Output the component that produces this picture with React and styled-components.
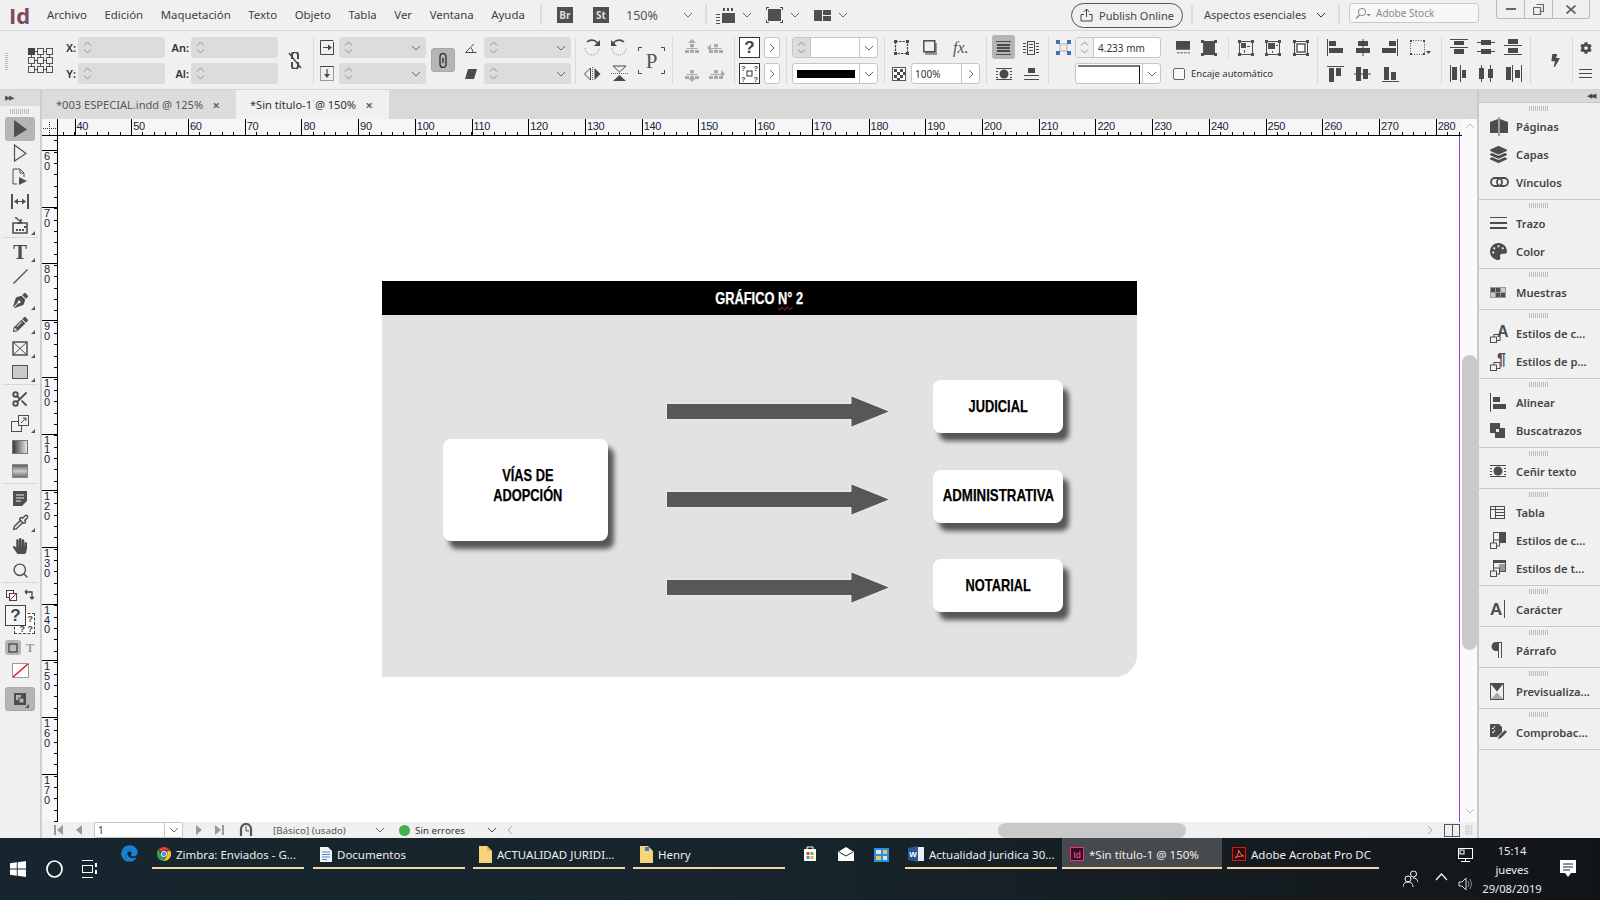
import React from "react";
import styled, { createGlobalStyle } from "styled-components";
import { FaPenNib, FaPencilAlt, FaHandPaper, FaLayerGroup, FaPalette, FaCog, FaBolt, FaEdge } from "react-icons/fa";
import { Scissors, Search, Pipette } from "lucide-react";

const Global = createGlobalStyle`
  html, body { margin: 0; padding: 0; background: #f0f0f0; overflow: hidden; }
  * { box-sizing: border-box; }
  body { font-family: "Noto Sans", "Open Sans", sans-serif; color: #444; }
`;

const rects = (list) => list.map(([x, y, w, h], i) => <rect key={i} x={x} y={y} width={w} height={h} />);

function Glyph({ w = 16, h = 16, children, color }) {
  return (
    <svg width={w} height={h} viewBox={`0 0 ${w} ${h}`} fill="currentColor" style={color ? { color } : undefined}>
      {children}
    </svg>
  );
}

const line = { fill: "none", stroke: "currentColor", strokeWidth: 1 };
const Chev = ({ dir = "down", w = 10, color = "#6a6a6a" }) => {
  const d = { down: "M1 2 L5 6 L9 2", up: "M1 6 L5 2 L9 6", right: "M3 0 L7 4 L3 8", left: "M7 0 L3 4 L7 8" }[dir];
  return <svg width={w} height="8" viewBox="0 0 10 8"><path d={d} fill="none" stroke={color} strokeWidth="1" /></svg>;
};

/* ---------- top menu ---------- */
const MenuBar = styled.div`
  height: 31px;
  display: flex;
  align-items: center;
  border-bottom: 1px solid #d4d4d4;
  position: relative;
`;
const Logo = styled.div`
  font: 700 22px/30px "Open Sans", sans-serif;
  color: #7b4a66;
  margin-left: 9px;
  width: 38px;
`;
const MenuList = styled.div`
  width: 493px;
  display: flex;
  gap: 17.6px;
  padding-bottom: 1px;
`;
const MenuItem = styled.span`
  font-size: 11.4px;
  color: #3e3e3e;
  white-space: nowrap;
`;
const MenuDiv = styled.div`
  width: 2px;
  height: 20px;
  background: #dcdcdc;
  margin-left: ${(p) => p.$ml || 0}px;
`;
const AppBadge = styled.div`
  width: 16px;
  height: 16px;
  background: #4f4f4f;
  color: #ddd;
  font: 700 10px/16px "Open Sans", sans-serif;
  text-align: center;
  margin-left: ${(p) => p.$ml}px;
`;
const ZoomText = styled.span`
  font-size: 12.5px;
  color: #555;
  margin-left: 17px;
  width: 57px;
`;
const Slot = styled.div`
  display: flex;
  align-items: center;
  color: #505050;
  margin-left: ${(p) => p.$ml || 0}px;
  gap: ${(p) => p.$gap || 0}px;
`;
const Publish = styled.div`
  width: 112px;
  height: 25px;
  border: 1px solid #555;
  border-radius: 13px;
  margin-left: ${(p) => p.$ml}px;
  display: flex;
  align-items: center;
  justify-content: center;
  gap: 6px;
  font-size: 11px;
  color: #444;
`;
const Workspace = styled.span`
  font-size: 11px;
  color: #444;
  margin-left: 11px;
  width: 110px;
  white-space: nowrap;
  padding-bottom: 1px;
`;
const StockBox = styled.div`
  width: 130px;
  height: 20px;
  border: 1px solid #c9c9c9;
  border-radius: 3px;
  background: #f7f7f7;
  margin-left: 9px;
  margin-top: -4px;
  padding-left: 5px;
  display: flex;
  align-items: center;
  gap: 5px;
  font-size: 10px;
  color: #8a8a8a;
`;
const WinControls = styled.div`
  display: flex;
  height: 19px;
  align-self: flex-start;
  margin-left: 17px;
  border: 1px solid #b9b9b9;
  border-top: 0;
  border-radius: 0 0 3px 3px;
  color: #666;
`;
const WinBtn = styled.div`
  width: ${(p) => p.$w}px;
  display: flex;
  align-items: center;
  justify-content: center;
  & + & { border-left: 1px solid #b9b9b9; }
`;

/* ---------- control panel ---------- */
const ControlPanel = styled.div`
  height: 59px;
  padding: 6px 0 5px;
  display: flex;
  align-items: flex-start;
  border-bottom: 1px solid #d4d4d4;
  color: #4a4a4a;
`;
const Grip = styled.div`
  width: 3px;
  height: 18px;
  margin-left: 5px;
  align-self: center;
  background: repeating-linear-gradient(0deg, #bcbcbc 0 1px, transparent 1px 2px);
`;
const PanelDiv = styled.div`
  width: 1px;
  height: ${(p) => p.$h || 47}px;
  flex: none;
  background: #dadada;
  margin-left: ${(p) => p.$ml}px;
`;
const Cluster = styled.div`
  display: grid;
  flex: none;
  grid-template-columns: ${(p) => p.$cols};
  grid-template-rows: 21px 21px;
  column-gap: ${(p) => p.$gap || 0}px;
  row-gap: 5px;
  align-items: center;
  justify-items: center;
  margin-left: ${(p) => p.$ml}px;
`;
const Stack = styled.div`
  display: flex;
  flex-direction: column;
  flex: none;
  gap: 5px;
  width: ${(p) => p.$w}px;
  margin-left: ${(p) => p.$ml}px;
`;
const Row = styled.div`
  height: 21px;
  display: flex;
  align-items: center;
  padding-left: ${(p) => p.$pl || 0}px;
  gap: ${(p) => p.$gap || 0}px;
`;
const Centered = styled.div`
  align-self: center;
  flex: none;
  display: flex;
  margin-left: ${(p) => p.$ml}px;
`;
const Label = styled.span`
  font-size: 11px;
  font-weight: 600;
  color: #333;
  justify-self: end;
  padding-right: 2px;
`;
const SpinBox = styled.div`
  width: ${(p) => p.$w || 87}px;
  height: 21px;
  background: #dcdcdc;
  border-radius: 3px;
  display: flex;
  align-items: center;
  justify-content: space-between;
  padding: 0 5px 0 5px;
`;
const SpinArrows = styled.div`
  display: flex;
  flex-direction: column;
  gap: 3px;
`;
const Spin = () => (
  <SpinArrows>
    <svg width="9" height="5" viewBox="0 0 9 5"><path d="M1 4.5 L4.5 1 L8 4.5" fill="none" stroke="#8d8d8d" /></svg>
    <svg width="9" height="5" viewBox="0 0 9 5"><path d="M1 .5 L4.5 4 L8 .5" fill="none" stroke="#8d8d8d" /></svg>
  </SpinArrows>
);
const SpinField = ({ drop }) => (
  <SpinBox>
    <Spin />
    {drop && <Chev />}
  </SpinBox>
);
const ChainBtn = styled.div`
  width: 24px;
  height: 24px;
  margin-left: 5px;
  margin-top: 11px;
  background: #b5b5b5;
  border: 1px solid #a8a8a8;
  border-radius: 3px;
  display: flex;
  align-items: center;
  justify-content: center;
  flex: none;
  color: #333;
`;
const WhiteBox = styled.div`
  width: ${(p) => p.$w}px;
  height: 21px;
  background: #fff;
  border: 1px solid #c6c6c6;
  border-radius: 3px;
  display: flex;
  align-items: stretch;
  font-size: 10px;
  color: #333;
`;
const BoxPart = styled.div`
  display: flex;
  align-items: center;
  justify-content: ${(p) => p.$justify || "center"};
  width: ${(p) => (p.$w ? `${p.$w}px` : "auto")};
  flex: ${(p) => (p.$w ? "none" : 1)};
  background: ${(p) => p.$bg || "transparent"};
  padding: ${(p) => p.$pad || 0};
  & + & { border-left: 1px solid #c6c6c6; }
`;
const BlackBar = styled.div`
  width: 100%;
  height: 8px;
  background: #000;
`;
const StrokeSample = styled.div`
  width: 100%;
  height: 100%;
  border-top: 2px solid #777;
  border-right: 1px solid #111;
  margin: 2px 2px 1px;
`;
const NextBtn = styled.div`
  width: 16px;
  height: 21px;
  background: #fff;
  border: 1px solid #c6c6c6;
  border-radius: 3px;
  display: flex;
  align-items: center;
  justify-content: center;
`;
const QBox = styled.div`
  width: 21px;
  height: 21px;
  border: 1px solid #333;
  background: #fff;
  font: 700 17px/19px "Liberation Sans", sans-serif;
  color: #444;
  text-align: center;
`;
const DashQ = () => (
  <svg width="21" height="21" viewBox="0 0 21 21">
    <rect x=".5" y=".5" width="20" height="20" fill="#fff" stroke="#333" />
    <rect x="8" y="8" width="5" height="5" fill="none" stroke="#333" />
    <g fontFamily="Liberation Sans, sans-serif" fontWeight="700" fontSize="7.5" fill="#444">
      <text x="2" y="7.5">?</text>
      <text x="14.5" y="7.5">?</text>
      <text x="2" y="19">?</text>
      <text x="14.5" y="19">?</text>
    </g>
  </svg>
);
const WrapBtn = styled.div`
  width: 23px;
  height: 24px;
  margin-top: -1px;
  display: flex;
  align-items: center;
  justify-content: center;
  border-radius: 3px;
  background: ${(p) => (p.$on ? "#b5b5b5" : "transparent")};
`;
const Check = styled.span`
  width: 12px;
  height: 12px;
  border: 1px solid #666;
  border-radius: 2px;
  background: #f8f8f8;
`;
const CheckText = styled.span`
  font-size: 9.5px;
  color: #333;
  white-space: nowrap;
`;
const Fx = styled.i`
  font: italic 400 16px/18px "Liberation Serif", serif;
  color: #555;
`;

/* ---------- shell ---------- */
const Main = styled.div`
  display: flex;
  height: 748px;
`;
const ToolBar = styled.div`
  width: 42px;
  flex: none;
  background: #f0f0f0;
  border-right: 2px solid #cfcfcf;
  display: flex;
  flex-direction: column;
`;
const StripLeft = styled.div`
  height: 16px;
  background: #dcdcdc;
  color: #555;
  font-size: 7px;
  line-height: 15px;
  padding-left: 5px;
  letter-spacing: -1px;
`;
const SmallGrip = styled.div`
  width: 20px;
  height: 5px;
  flex: none;
  background: repeating-linear-gradient(90deg, #bdbdbd 0 1px, transparent 1px 2px);
`;
const ToolGrip = styled(SmallGrip)`
  margin: 3px auto 3px 10px;
`;
const Tool = styled.div`
  height: 24px;
  display: flex;
  align-items: center;
  justify-content: center;
  color: #4f4f4f;
  position: relative;
  width: 40px;
  ${(p) =>
    p.$corner &&
    `&::after { content: ""; position: absolute; right: 5px; bottom: 2px; border: 2px solid transparent; border-right-color: #555; border-bottom-color: #555; }`}
`;
const ToolOn = styled(Tool)`
  width: 30px;
  margin-left: 5px;
  background: #b5b5b5;
  border-radius: 3px;
`;
const ToolSep = styled.div`
  height: 3px;
  flex: none;
  border-top: 1px solid #d8d8d8;
  margin: 0 2px;
`;
const ToolT = styled.span`
  font: 700 21px/24px "Liberation Serif", serif;
  color: #4f4f4f;
`;
const Swatches = styled.div`
  height: 75px;
  position: relative;
`;
const SwatchRow = styled.div`
  height: 20px;
  display: flex;
  align-items: center;
  justify-content: space-between;
  padding: 0 5px 0 6px;
  color: #444;
`;
const BigQ = styled.div`
  position: absolute;
  left: 5px;
  top: 20px;
  width: 21px;
  height: 21px;
  background: #f5f5f5;
  border: 1px solid #444;
  font: 700 17px/19px "Liberation Sans", sans-serif;
  text-align: center;
  color: #444;
  z-index: 1;
`;
const BackQ = styled(BigQ)`
  left: 14px;
  top: 28px;
  z-index: 0;
  background: #fff;
  border-style: dashed;
  font-size: 9px;
  line-height: 10px;
  text-align: right;
  padding-right: 1px;
`;
const ModeRow = styled.div`
  position: absolute;
  left: 5px;
  top: 55px;
  display: flex;
  align-items: center;
  gap: 3px;
`;
const ModeBtn = styled.div`
  width: 16px;
  height: 15px;
  background: #b5b5b5;
  border-radius: 3px;
  display: flex;
  align-items: center;
  justify-content: center;
`;
const ModeT = styled.span`
  font: 700 12px/14px "Liberation Serif", serif;
  color: #9a9a9a;
  margin-left: 2px;
`;
const NoneSwatch = styled.div`
  width: 17px;
  height: 15px;
  margin: 3px 0 0 12px;
  background: #fff;
  border: 1px solid #999;
  display: flex;
`;
const ViewMode = styled(ToolOn)`
  margin-top: 9px;
  border: 1px solid #a9a9a9;
`;

const Center = styled.div`
  width: 1435px;
  flex: none;
  display: flex;
  flex-direction: column;
`;
const TabBar = styled.div`
  height: 29px;
  flex: none;
  background: #d9d9d9;
  display: flex;
`;
const Tab = styled.div`
  width: ${(p) => p.$w}px;
  background: ${(p) => (p.$on ? "#f0f0f0" : "#dcdcdc")};
  display: flex;
  align-items: center;
  justify-content: space-between;
  padding: 0 16px 0 14px;
  font-size: 11.1px;
  color: ${(p) => (p.$on ? "#333" : "#555")};
  white-space: nowrap;
  & b { font-size: 13px; color: #666; }
`;
const View = styled.div`
  flex: 1;
  display: flex;
  min-height: 0;
`;
const ViewLeft = styled.div`
  width: 1420px;
  display: flex;
  flex-direction: column;
`;
const HRuler = styled.div`
  height: 17px;
  flex: none;
  display: flex;
  background: #f6f6f6;
  border-bottom: 1px solid #000;
  overflow: hidden;
`;
const RulerCorner = styled.div`
  width: 16px;
  flex: none;
  border-right: 1px solid #000;
  color: #333;
`;
const HTrack = styled.div`
  flex: 1;
  display: flex;
  padding-left: 16.5px;
  background-image: repeating-linear-gradient(90deg, #000 0 1px, transparent 1px 11.346px);
  background-size: 100% 3px;
  background-position: 5.2px 100%;
  background-repeat: no-repeat;
`;
const HCell = styled.div`
  width: 56.73px;
  flex: none;
  border-left: 1px solid #000;
  padding-left: 1px;
  font: 11px/14px "Liberation Sans", sans-serif;
  letter-spacing: -0.3px;
  color: #1a2340;
`;
const Stage = styled.div`
  flex: 1;
  display: flex;
  min-height: 0;
`;
const VRuler = styled.div`
  width: 16px;
  flex: none;
  background-color: #f6f6f6;
  border-right: 1px solid #000;
  overflow: hidden;
  padding-top: 14px;
  background-image: repeating-linear-gradient(0deg, #000 0 1px, transparent 1px 11.346px);
  background-size: 3px 100%;
  background-position: 100% 0;
  background-repeat: no-repeat;
`;
const VCell = styled.div`
  height: 56.73px;
  border-top: 1px solid #000;
  padding: 1px 0 0 2px;
  font: 11px/9.8px "Liberation Sans", sans-serif;
  color: #1a2340;
  & span { display: block; }
`;
const Canvas = styled.div`
  flex: 1;
  background: #fff;
  padding-right: 2px;
  display: flex;
  overflow: hidden;
`;
const Page = styled.div`
  flex: 1;
  border-right: 1.5px solid #9b3fdc;
  padding: 145px 0 0 324px;
`;
const ScrollV = styled.div`
  width: 15px;
  flex: none;
  background: #fafafa;
  display: flex;
  flex-direction: column;
  align-items: center;
  padding-top: 3px;
`;
const ThumbV = styled.div`
  width: 15px;
  height: 295px;
  margin-top: 225px;
  margin-bottom: 157px;
  border-radius: 8px;
  background: #c9c9c9;
`;
const StatusBar = styled.div`
  height: 16px;
  flex: none;
  background: #f0f0f0;
  display: flex;
  align-items: center;
  font-size: 9.8px;
  color: #555;
`;
const StatusField = styled(WhiteBox)`
  height: 16px;
  margin-left: 12px;
  border-radius: 2px;
`;
const StatusText = styled.span`
  margin-left: ${(p) => p.$ml}px;
  width: ${(p) => p.$w}px;
  white-space: nowrap;
  color: ${(p) => p.$color || "#555"};
`;
const GreenDot = styled.span`
  width: 11px;
  height: 11px;
  border-radius: 50%;
  background: #3fb04a;
  margin-left: 14px;
`;
const ThumbH = styled.div`
  width: 188px;
  height: 15px;
  background: #c9c9c9;
  border-radius: 8px;
  margin-left: 483px;
`;
const SplitIcon = styled.div`
  width: 16px;
  height: 13px;
  border: 1px solid #555;
  margin-left: 9px;
  display: flex;
  justify-content: center;
  & i { width: 1px; background: #555; }
`;
const Resize = styled.div`
  width: 8px;
  height: 10px;
  margin-left: 5px;
  background: radial-gradient(#bbb 45%, transparent 50%) 0 0 / 2.5px 2.5px;
`;

/* ---------- chart on the page ---------- */
const Chart = styled.div`
  width: 755px;
  height: 396px;
  background: #e2e2e2;
  border-bottom-right-radius: 22px;
  display: flex;
  flex-direction: column;
`;
const ChartHead = styled.div`
  height: 34px;
  flex: none;
  background: #000;
  display: flex;
  align-items: center;
  justify-content: center;
  padding-top: 1px;
`;
const Condensed = styled.span`
  display: inline-block;
  font: 700 17px/20px "Liberation Sans", sans-serif;
  -webkit-text-stroke: 0.25px currentColor;
  white-space: nowrap;
  transform: scaleX(${(p) => p.$sx || 0.755});
  color: ${(p) => p.$color || "#000"};
  text-align: center;
`;
const Squiggle = styled.span`
  text-decoration: underline wavy #c0392b 1px;
  text-underline-offset: 2px;
`;
const ChartBody = styled.div`
  flex: 1;
  display: flex;
  align-items: flex-start;
  padding-left: 61px;
`;
const Box = styled.div`
  background: #fff;
  border-radius: 8px;
  box-shadow: 6px 8px 5px rgba(0, 0, 0, 0.62);
  display: flex;
  justify-content: center;
`;
const SourceBox = styled(Box)`
  width: 165px;
  height: 102px;
  margin-top: 124px;
  padding: 27px 0 0 5px;
`;
const ArrowCol = styled.div`
  width: 225px;
  margin: 80px 0 0 58px;
  display: flex;
  flex-direction: column;
  gap: 55px;
  & svg { display: block; }
`;
const TargetCol = styled.div`
  margin: 65px 0 0 42px;
  display: flex;
  flex-direction: column;
  gap: 36.5px;
`;
const TargetBox = styled(Box)`
  width: 130px;
  height: 53px;
  align-items: center;
`;

const Arrow = () => (
  <svg width="225" height="33" viewBox="0 0 225 33">
    <path d="M.5 8.5 H185 V.8 L224 16.5 L185 32.2 V24.5 H.5 Z" fill="#575756" stroke="#fff" strokeWidth=".8" />
  </svg>
);

/* ---------- right panels ---------- */
const Side = styled.div`
  width: 123px;
  flex: none;
  border-left: 2px solid #c9c9c9;
  background: #f0f0f0;
  display: flex;
  flex-direction: column;
`;
const StripRight = styled.div`
  height: 13px;
  flex: none;
  background: #d9d9d9;
  border-bottom: 1px solid #c9c9c9;
  color: #444;
  font-size: 7px;
  line-height: 11px;
  text-align: right;
  padding-right: 5px;
  letter-spacing: -1px;
`;
const Group = styled.div`
  border-bottom: 1px solid #cacaca;
  padding: 9px 0 3px;
  position: relative;
  &::before {
    content: "";
    position: absolute;
    left: 50px;
    top: 3px;
    width: 20px;
    height: 5px;
    background: repeating-linear-gradient(90deg, #bdbdbd 0 1px, transparent 1px 2px);
  }
`;
const Item = styled.div`
  height: 28px;
  display: flex;
  align-items: center;
  font-size: 11.2px;
  font-weight: 600;
  color: #444;
  white-space: nowrap;
`;
const ItemIcon = styled.div`
  width: 37px;
  padding-left: 11px;
  flex: none;
  display: flex;
  align-items: center;
  color: #4d4d4d;
`;

/* ---------- taskbar ---------- */
const Taskbar = styled.div`
  height: 62px;
  background: linear-gradient(90deg, #17262e 0%, #17242b 50%, #121518 100%);
  display: flex;
  align-items: flex-start;
  color: #f2f2f2;
`;
const TbIcon = styled.div`
  margin-left: ${(p) => p.$ml}px;
  margin-top: ${(p) => p.$mt}px;
  display: flex;
  flex: none;
  color: #fff;
`;
const Task = styled.div`
  width: ${(p) => p.$w || 152}px;
  height: 31px;
  flex: none;
  margin-left: ${(p) => p.$ml}px;
  border-bottom: 2px solid #f8d5a8;
  background: ${(p) => (p.$on ? "#474a4c" : "transparent")};
  display: flex;
  align-items: center;
  gap: 5px;
  padding: 3px 0 0 ${(p) => p.$pl || 5}px;
  font-size: 11.5px;
  color: #eee;
  white-space: nowrap;
  & svg { flex: none; }
`;
const TrayCol = styled.div`
  display: flex;
  flex-direction: column;
  margin-left: 10px;
  margin-top: 10px;
  gap: 15px;
`;
const Clock = styled.div`
  width: 70px;
  margin-left: 4px;
  padding-top: 3px;
  text-align: center;
  font-size: 11.2px;
  line-height: 19px;
  color: #eee;
`;

/* ---------- drawings ---------- */
const menuIcons = {
  film: <Glyph w={19} h={17}>{rects([[6, 6, 13, 10], [0, 7, 4, 1], [0, 10, 4, 1], [0, 13, 4, 1], [0, 16, 4, 1], [7, 1, 2, 3], [11, 1, 2, 3], [15, 1, 2, 3]])}</Glyph>,
  screen: <Glyph w={17} h={16}>{rects([[2, 2, 13, 12], [0, 0, 3, 1], [0, 0, 1, 3], [14, 0, 3, 1], [16, 0, 1, 3], [0, 15, 3, 1], [0, 13, 1, 3], [14, 15, 3, 1], [16, 13, 1, 3]])}</Glyph>,
  layout: <Glyph w={17} h={13}>{rects([[0, 1, 8, 11], [9, 1, 8, 5], [9, 7, 8, 5]])}</Glyph>,
  upload: (
    <Glyph w={13} h={14}>
      <path d="M6.5 9 V1 M3.5 4 L6.5 1 L9.5 4 M1 6.5 V13 H12 V6.5 H9 M4 6.5 H1" {...line} />
    </Glyph>
  ),
  search: (
    <Glyph w={16} h={12}>
      <circle cx="7" cy="5" r="3.6" {...line} />
      <path d="M4.5 8 L1 11.5" stroke="currentColor" strokeWidth="1.5" />
      <path d="M11.5 7 H16 L13.7 9.5 Z" />
    </Glyph>
  ),
};

const ctl = {
  ref: (
    <Glyph w={25} h={25}>
      <g {...line} stroke="#555">
        {[0, 9, 18].flatMap((y) => [0, 9, 18].map((x) => <rect key={`${x}${y}`} x={x + .5} y={y + .5} width="6" height="6" />))}
      </g>
      <rect width="7" height="7" fill="#444" />
      <path d="M7 3.5h2M16 3.5h2M7 12.5h2M16 12.5h2M7 21.5h2M16 21.5h2M3.5 7v2M3.5 16v2M12.5 7v2M12.5 16v2M21.5 7v2M21.5 16v2" stroke="#555" />
    </Glyph>
  ),
  unlink: (
    <Glyph w={14} h={17}>
      <path d="M4 3 a3 3 0 0 1 6 0 V7 M4 3 V7 M4 10 V14 a3 3 0 0 0 6 0 V10" fill="none" stroke="currentColor" strokeWidth="2" />
      <path d="M1 1 L13 16" stroke="currentColor" strokeWidth="1.3" />
    </Glyph>
  ),
  chain: (
    <Glyph w={8} h={15}>
      <path d="M1 5 V3.5 a3 3 0 0 1 6 0 V11.5 a3 3 0 0 1 -6 0 V5 M4 5 V10" fill="none" stroke="currentColor" strokeWidth="1.4" />
    </Glyph>
  ),
  boxR: (
    <Glyph w={14} h={15}>
      <path d="M.5 14.5 V.5 H13.5 M13.5 2 V14.5 H.5" fill="none" stroke="#444" strokeDasharray="14 0" />
      <path d="M3 7 H8 V4.5 L12 7.5 L8 10.5 V8 H3 Z" />
    </Glyph>
  ),
  boxD: (
    <Glyph w={14} h={15}>
      <rect x=".5" y=".5" width="13" height="14" fill="none" stroke="#444" strokeDasharray="1 1" />
      <path d="M.5 .5 H13.5" stroke="#444" />
      <path d="M6.4 3 V8 H4 L7 12 L10 8 H7.6 V3 Z" />
    </Glyph>
  ),
  angle: <Glyph w={12} h={10}><path d="M.5 9.5 H11.5 M.5 9.5 L9 .8 M6 5 Q8 7 8 9.5" {...line} /></Glyph>,
  shear: <Glyph w={12} h={10}><path d="M3 0 H12 L9 10 H0 Z" /></Glyph>,
  rotCw: (
    <Glyph w={18} h={17}>
      <path d="M4 3 A7 7 0 0 1 15 5" fill="none" stroke="currentColor" strokeWidth="1.6" />
      <path d="M17 1 V7 H11 Z" />
      <path d="M2 9 A7 7 0 0 0 16 9" fill="none" stroke="#888" strokeDasharray="1 1" />
    </Glyph>
  ),
  rotCcw: (
    <Glyph w={18} h={17}>
      <path d="M14 3 A7 7 0 0 0 3 5" fill="none" stroke="currentColor" strokeWidth="1.6" />
      <path d="M1 1 V7 H7 Z" />
      <path d="M2 9 A7 7 0 0 0 16 9" fill="none" stroke="#888" strokeDasharray="1 1" />
    </Glyph>
  ),
  flipH: (
    <Glyph w={17} h={14}>
      <path d="M7 1 V13 L1 7 Z" transform="translate(-.5 0)" fill="none" stroke="currentColor" />
      <path d="M10.5 1 V13 L16.5 7 Z" />
      <path d="M8.5 0 V14" stroke="#666" strokeDasharray="1 1" />
    </Glyph>
  ),
  flipV: (
    <Glyph w={17} h={17}>
      <path d="M2 1 H15 L8.5 7 Z" fill="none" stroke="currentColor" />
      <path d="M2 16 H15 L8.5 10 Z" />
      <path d="M0 8.5 H17" stroke="#666" strokeDasharray="1 1" />
    </Glyph>
  ),
  p: (
    <Glyph w={27} h={27}>
      <path d="M.5 4 V.5 H4 M23 .5 H26.5 V4 M.5 23 V26.5 H4 M23 26.5 H26.5 V23" {...line} />
      <text x="13.5" y="21" textAnchor="middle" fontFamily="Liberation Serif, serif" fontSize="21" fill="#555">P</text>
    </Glyph>
  ),
  tree: (arrow) => (
    <Glyph w={18} h={17}>
      <g color="#aaa" fill="#aaa">
        {arrow === "up" && <path d="M9 0 L13 4 H5 Z" />}
        {arrow === "down" && <path d="M9 17 L13 13 H5 Z" />}
        {arrow === "left" && <path d="M0 9 L4 5 V13 Z" />}
        {arrow === "right" && <path d="M18 9 L14 5 V13 Z" />}
        {rects([[7, 5, 4, 3], [2, 11, 4, 3], [7, 11, 4, 3], [12, 11, 4, 3], [8.5, 8, 1, 3], [3.5, 9, 11, 1]])}
      </g>
    </Glyph>
  ),
  fitDash: (
    <Glyph w={15} h={15}>
      <rect x="1.5" y="1.5" width="12" height="12" fill="none" stroke="#444" strokeWidth="1.2" strokeDasharray="2.5 1" />
      {rects([[0, 0, 3, 3], [12, 0, 3, 3], [0, 12, 3, 3], [12, 12, 3, 3]])}
    </Glyph>
  ),
  shadow: (
    <Glyph w={14} h={15}>
      <rect x="2" y="3" width="12" height="12" fill="#999" />
      <rect x=".8" y=".8" width="11" height="11" fill="#f0f0f0" stroke="#444" strokeWidth="1.4" />
    </Glyph>
  ),
  checker: (
    <Glyph w={14} h={14}>
      <rect x=".5" y=".5" width="13" height="13" fill="#fff" stroke="#555" />
      {rects([[2, 2, 3, 3], [8, 2, 3, 3], [5, 5, 3, 3], [11, 5, 2, 3], [2, 8, 3, 3], [8, 8, 3, 3], [5, 11, 3, 2]])}
    </Glyph>
  ),
  wrapOn: <Glyph w={15} h={15}>{rects([[0, 1, 15, 1], [0, 14, 15, 1], [1, 4, 13, 2], [1, 7, 13, 2], [1, 10, 13, 2]])}</Glyph>,
  wrapTwo: (
    <Glyph w={16} h={14}>
      <rect x="4.5" y=".5" width="7" height="13" fill="none" stroke="currentColor" />
      {rects([[0, 2, 3, 1], [0, 5, 3, 1], [0, 8, 3, 1], [0, 11, 3, 1], [13, 2, 3, 1], [13, 5, 3, 1], [13, 8, 3, 1], [13, 11, 3, 1], [6, 3, 4, 1], [6, 6, 4, 1], [6, 9, 4, 1]])}
    </Glyph>
  ),
  wrapRound: (
    <Glyph w={16} h={14}>
      <circle cx="8" cy="7" r="4.5" />
      {rects([[0, 1, 16, 1], [0, 12, 16, 1], [0, 4, 2, 1], [14, 4, 2, 1], [0, 7, 2, 1], [14, 7, 2, 1], [0, 10, 2, 1], [14, 10, 2, 1]])}
    </Glyph>
  ),
  wrapJump: <Glyph w={15} h={14}>{rects([[4, 1, 7, 5], [0, 8, 15, 1], [0, 12, 15, 1]])}</Glyph>,
  spacing: (
    <Glyph w={15} h={15} color="#3f6fb5">
      {rects([[0, 0, 4, 4], [11, 0, 4, 4], [0, 11, 4, 4], [11, 11, 4, 4]])}
      <rect x="4" y="4" width="7" height="7" fill="none" stroke="#aaa" />
    </Glyph>
  ),
  fill1: <Glyph w={16} h={16}>{rects([[0, 0, 16, 10], [1, 13, 3, 1], [5, 13, 3, 1], [9, 13, 3, 1], [13, 13, 3, 1]])}</Glyph>,
  fill2: <Glyph w={16} h={16}>{rects([[2, 1, 12, 14], [0, 0, 3, 3], [13, 0, 3, 3], [0, 13, 3, 3], [13, 13, 3, 3]])}</Glyph>,
  fit: (v) => (
    <Glyph w={16} h={16}>
      <rect x="1.5" y="1.5" width="13" height="13" fill="none" stroke="currentColor" />
      {rects([[0, 0, 3, 3], [13, 0, 3, 3], [0, 13, 3, 3], [13, 13, 3, 3]])}
      {v === 0 && rects([[3, 3, 5, 5], [9, 6, 3, 1], [6, 10, 1, 3]])}
      {v === 1 && rects([[3, 3, 7, 6], [11, 5, 2, 1], [7, 11, 1, 2]])}
      {v === 2 && <rect x="4" y="4" width="8" height="8" fill="#fff" stroke="currentColor" strokeWidth="1.4" />}
    </Glyph>
  ),
  alignL: <Glyph w={16} h={17}>{rects([[0, 0, 1, 17], [2, 2, 7, 5], [2, 9, 14, 5]])}</Glyph>,
  alignC: <Glyph w={16} h={17}>{rects([[7.5, 0, 1, 17], [3, 2, 10, 5], [1, 9, 14, 5]])}</Glyph>,
  alignR: <Glyph w={16} h={17}>{rects([[15, 0, 1, 17], [7, 2, 7, 5], [0, 9, 14, 5]])}</Glyph>,
  alignPage: (
    <Glyph w={21} h={17}>
      <rect x=".5" y="1.5" width="14" height="14" fill="none" stroke="currentColor" strokeDasharray="1 1.5" />
      {rects([[0, 1, 2, 2], [13, 1, 2, 2], [0, 14, 2, 2], [13, 14, 2, 2]])}
      <path d="M16 12 H21 L18.5 15 Z" />
    </Glyph>
  ),
  alignT: <Glyph w={17} h={16}>{rects([[0, 0, 17, 1], [2, 2, 5, 14], [9, 2, 5, 8]])}</Glyph>,
  alignM: <Glyph w={17} h={16}>{rects([[0, 7.5, 17, 1], [2, 1, 5, 14], [9, 3, 5, 10]])}</Glyph>,
  alignB: <Glyph w={17} h={16}>{rects([[0, 15, 17, 1], [2, 1, 5, 13], [9, 6, 5, 8]])}</Glyph>,
  distT: <Glyph w={18} h={17}>{rects([[0, 0, 18, 1], [4, 2, 10, 4], [0, 8, 18, 1], [4, 10, 10, 5]])}</Glyph>,
  distC: <Glyph w={18} h={17}>{rects([[0, 3, 18, 1], [4, 1, 10, 5], [0, 12, 18, 1], [4, 10, 10, 5]])}</Glyph>,
  distB: <Glyph w={18} h={17}>{rects([[4, 0, 10, 5], [0, 6, 18, 1], [4, 9, 10, 5], [0, 15, 18, 1]])}</Glyph>,
  distL: <Glyph w={18} h={17}>{rects([[0, 0, 1, 17], [2, 2, 5, 13], [10, 0, 1, 17], [12, 5, 4, 8]])}</Glyph>,
  distM: <Glyph w={18} h={17}>{rects([[4, 0, 1, 17], [2, 3, 5, 11], [13, 0, 1, 17], [11, 4, 5, 9]])}</Glyph>,
  distR: <Glyph w={18} h={17}>{rects([[2, 2, 5, 13], [8, 0, 1, 17], [11, 5, 5, 8], [17, 0, 1, 17]])}</Glyph>,
  bars: <Glyph w={13} h={9}>{rects([[0, 0, 13, 1], [0, 4, 13, 1], [0, 8, 13, 1]])}</Glyph>,
};

const toolIcons = {
  arrow: <Glyph w={14} h={18}><path d="M1 0 L14 9.5 L1 17.5 Z" /></Glyph>,
  direct: <Glyph w={14} h={18}><path d="M1.5 1 L13 9.5 L1.5 17 Z" fill="none" stroke="currentColor" strokeWidth="1.2" /></Glyph>,
  pageT: (
    <Glyph w={16} h={18}>
      <path d="M1 1 H8 L12 5 V9 M5 16 H1 V1 M8 1 V5 H12" {...line} />
      <path d="M7 9 L15 13 L7 17 Z" />
    </Glyph>
  ),
  gap: (
    <Glyph w={18} h={15}>
      {rects([[0, 0, 2, 15], [16, 0, 2, 15], [6, 7, 6, 1]])}
      <path d="M3 7.5 L7 4.5 V10.5 Z M15 7.5 L11 4.5 V10.5 Z" />
    </Glyph>
  ),
  collect: (
    <Glyph w={16} h={17}>
      <path d="M1 6 H15 V16 H1 Z" fill="none" stroke="currentColor" strokeWidth="1.6" />
      {rects([[4, 12, 2, 2], [7, 12, 2, 2], [10, 12, 2, 2], [12, 9, 2, 2]])}
      <path d="M3 0 L9 5 M9 2 V6 H5" fill="none" stroke="currentColor" strokeWidth="1.5" />
    </Glyph>
  ),
  line: <Glyph w={15} h={15}><path d="M0.5 14.5 L14.5 .5" stroke="currentColor" strokeWidth="1.2" /></Glyph>,
  frameX: (
    <Glyph w={16} h={15}>
      <rect x="1" y="1" width="14" height="13" fill="none" stroke="currentColor" strokeWidth="1.5" />
      <path d="M1 1 L15 14 M15 1 L1 14" stroke="currentColor" />
    </Glyph>
  ),
  rect: <Glyph w={16} h={14}><rect x=".5" y=".5" width="15" height="13" fill="#c9c9c9" stroke="#555" /></Glyph>,
  transform: (
    <Glyph w={18} h={17}>
      <rect x=".5" y="6.5" width="10" height="10" fill="none" stroke="currentColor" />
      <rect x="7.5" y=".5" width="10" height="10" fill="#f0f0f0" stroke="currentColor" />
      <path d="M10 8 L15 3 M12 3 H15 V6" fill="none" stroke="currentColor" />
    </Glyph>
  ),
  gradient: (
    <svg width="16" height="14" viewBox="0 0 16 14">
      <defs><linearGradient id="gr1"><stop offset="0" stopColor="#333" /><stop offset="1" stopColor="#eee" /></linearGradient></defs>
      <rect x=".5" y=".5" width="15" height="13" fill="url(#gr1)" stroke="#777" />
    </svg>
  ),
  feather: (
    <svg width="16" height="14" viewBox="0 0 16 14">
      <defs><linearGradient id="gr2" x2="0" y2="1"><stop offset="0" stopColor="#555" /><stop offset=".5" stopColor="#ccc" /><stop offset="1" stopColor="#666" /></linearGradient></defs>
      <rect x=".5" y=".5" width="15" height="13" fill="url(#gr2)" stroke="#888" />
    </svg>
  ),
  note: (
    <Glyph w={14} h={15}>
      <path d="M0 0 H14 V10 L9 15 H0 Z" />
      <path d="M3 4 H11 M3 7 H11 M3 10 H8" stroke="#f0f0f0" />
    </Glyph>
  ),
};

const panelIcons = {
  pages: (
    <Glyph w={18} h={19}>
      <path d="M0 5 L8 2 V16 H0 Z M10 2 L18 5 V16 H10 Z" />
      <path d="M8.5 0 H9.5 V19 H8.5 Z" />
    </Glyph>
  ),
  layers: <FaLayerGroup size={17} />,
  links: (
    <Glyph w={19} h={10}>
      <rect x="1" y="1" width="11" height="8" rx="4" fill="none" stroke="currentColor" strokeWidth="1.8" />
      <rect x="7" y="1" width="11" height="8" rx="4" fill="none" stroke="currentColor" strokeWidth="1.8" />
    </Glyph>
  ),
  stroke: <Glyph w={17} h={12}>{rects([[0, 0, 17, 1], [0, 5, 17, 2], [0, 10, 17, 3]])}</Glyph>,
  palette: <FaPalette size={17} />,
  swatches: (
    <Glyph w={16} h={11}>
      <path d="M0 0 H16 V11 H0 Z" fill="#999" />
      {rects([[1, 1, 4, 4], [6, 1, 4, 4], [11, 6, 4, 4], [6, 6, 4, 4]])}
      <path d="M11 1 h4 v4 h-4 Z M1 6 h4 v4 h-4 Z" fill="#ccc" />
    </Glyph>
  ),
  styleC: (
    <Glyph w={19} h={23}>
      <text x="7" y="15" fontFamily="Liberation Sans, sans-serif" fontWeight="700" fontSize="16">A</text>
      <rect x="4" y="12.5" width="6" height="6" fill="none" stroke="currentColor" />
      <rect x=".5" y="15" width="6" height="5.5" fill="#f0f0f0" stroke="currentColor" />
    </Glyph>
  ),
  styleP: (
    <Glyph w={19} h={23}>
      <text x="7" y="15" fontFamily="Liberation Sans, sans-serif" fontWeight="700" fontSize="16">¶</text>
      <rect x="4" y="12.5" width="6" height="6" fill="none" stroke="currentColor" />
      <rect x=".5" y="15" width="6" height="5.5" fill="#f0f0f0" stroke="currentColor" />
    </Glyph>
  ),
  align: <Glyph w={16} h={19}>{rects([[0, 0, 1, 19], [3, 4, 7, 5], [3, 11, 13, 5]])}</Glyph>,
  path: (
    <Glyph w={15} h={15}>
      <path d="M0 0 H10 V5 H15 V15 H5 V10 H0 Z" />
      <rect x="5.5" y="5.5" width="4" height="4" fill="#f0f0f0" stroke="currentColor" />
    </Glyph>
  ),
  wrap: ctl.wrapRound,
  table: (
    <Glyph w={15} h={13}>
      <rect x=".5" y=".5" width="14" height="12" fill="none" stroke="currentColor" />
      <path d="M.5 3.5 H14.5 M5.5 .5 V12.5 M5.5 6.5 H14.5 M5.5 9.5 H14.5" stroke="currentColor" />
    </Glyph>
  ),
  cellStyle: (
    <Glyph w={16} h={17}>
      <rect x="3.5" y=".5" width="12" height="10" fill="none" stroke="currentColor" />
      <rect x="9" y="1" width="6" height="9" />
      <rect x="3.5" y="8" width="6" height="6" fill="#f0f0f0" stroke="currentColor" />
      <rect x=".5" y="11" width="6" height="5.5" fill="#f0f0f0" stroke="currentColor" />
    </Glyph>
  ),
  tableStyle: (
    <Glyph w={16} h={17}>
      <rect x="3.5" y=".5" width="12" height="11" fill="none" stroke="currentColor" />
      {rects([[4, 1, 11, 2]])}
      <rect x="9" y="4" width="6" height="7" fill="#999" />
      <rect x="3.5" y="8" width="6" height="6" fill="#f0f0f0" stroke="currentColor" />
      <rect x=".5" y="11" width="6" height="5.5" fill="#f0f0f0" stroke="currentColor" />
    </Glyph>
  ),
  char: (
    <Glyph w={15} h={20}>
      <text x="0" y="16" fontFamily="Liberation Sans, sans-serif" fontWeight="700" fontSize="17">A</text>
      <rect x="14" y="1" width="1" height="18" />
    </Glyph>
  ),
  para: (
    <Glyph w={12} h={16}>
      <path d="M6 0 H12 V16 H11 V1 H9 V16 H8 V9 H6 A4.5 4.5 0 0 1 6 0 Z" />
    </Glyph>
  ),
  preview: (
    <Glyph w={14} h={17}>
      <rect x=".5" y=".5" width="13" height="16" fill="#f0f0f0" stroke="#4d4d4d" />
      <path d="M0 0 H14 L7 8.5 Z" fill="#4d4d4d" />
      <path d="M1 16 L7 9.5 L13 16 Z" fill="#aaa" />
    </Glyph>
  ),
  check: (
    <Glyph w={17} h={16}>
      <path d="M0 0 H9 L12 3 V8 L7 13 H0 Z" />
      <path d="M2 4 L3 5 L5 2 M2 8 L3 9 L5 6" fill="none" stroke="#f0f0f0" />
      <path d="M9 12 L15 6 L17 8 L11 14 L8 15 Z" />
    </Glyph>
  ),
};

const taskIcons = {
  chrome: (
    <svg width="14" height="14" viewBox="0 0 14 14">
      <path d="M7 0 A7 7 0 0 1 13.1 3.5 H7 A3.5 3.5 0 0 0 3.9 5.3 L1.5 2.4 A7 7 0 0 1 7 0 Z" fill="#e14133" />
      <path d="M13.1 3.5 A7 7 0 0 1 6.5 14 L9.8 8.8 A3.5 3.5 0 0 0 9.5 4.6 Z" fill="#f7c52c" />
      <path d="M1.5 2.4 L4.6 7.8 A3.5 3.5 0 0 0 8 10.4 L6.5 14 A7 7 0 0 1 1.5 2.4 Z" fill="#34a04f" />
      <circle cx="7" cy="7" r="2.7" fill="#4a8bf0" stroke="#fff" strokeWidth=".8" />
    </svg>
  ),
  doc: (
    <svg width="12" height="15" viewBox="0 0 12 15">
      <path d="M0 0 H8 L12 4 V15 H0 Z" fill="#f4f4f4" />
      <path d="M2 5 H10 M2 7.5 H10 M2 10 H10 M2 12.5 H7" stroke="#4a8bd0" />
    </svg>
  ),
  folder: <svg width="13" height="17" viewBox="0 0 13 17"><path d="M0 0 H8 L13 5 V17 H0 Z" fill="#f6d479" /><path d="M8 0 L13 5 H8 Z" fill="#e0b64f" /></svg>,
  folderBlue: (
    <svg width="13" height="17" viewBox="0 0 13 17">
      <path d="M0 0 H8 L13 5 V17 H0 Z" fill="#f6d479" />
      <rect x="5" y="1" width="4" height="4" fill="#3c7fd0" />
    </svg>
  ),
  word: (
    <svg width="16" height="16" viewBox="0 0 16 16">
      <rect x="6" y="1" width="10" height="14" fill="#e9eef7" />
      <path d="M0 2 L10 0 V16 L0 14 Z" fill="#2b5797" />
      <text x="5" y="11" textAnchor="middle" fontSize="8" fontWeight="700" fill="#fff" fontFamily="Liberation Sans, sans-serif">W</text>
    </svg>
  ),
  id: (
    <svg width="14" height="14" viewBox="0 0 14 14">
      <rect x=".5" y=".5" width="13" height="13" fill="#3b0a24" stroke="#e8327c" />
      <text x="7" y="10.5" textAnchor="middle" fontSize="9" fill="#ee6ba0" fontFamily="Liberation Sans, sans-serif">Id</text>
    </svg>
  ),
  acrobat: (
    <svg width="14" height="14" viewBox="0 0 14 14">
      <rect x=".5" y=".5" width="13" height="13" fill="#3a0606" stroke="#e0140c" />
      <path d="M3 11 C6 8 7 5 6.5 3 C8 6 9 8 11.5 9 C8 9 5 9.5 3 11 Z" fill="none" stroke="#f3a19c" strokeWidth=".8" />
    </svg>
  ),
};

const rulerH = Array.from({ length: 25 }, (_, i) => 40 + i * 10);
const rulerV = Array.from({ length: 12 }, (_, i) => 60 + i * 10);

const panels = [
  [["pages", "Páginas"], ["layers", "Capas"], ["links", "Vínculos"]],
  [["stroke", "Trazo"], ["palette", "Color"]],
  [["swatches", "Muestras"]],
  [["styleC", "Estilos de c..."], ["styleP", "Estilos de p..."]],
  [["align", "Alinear"], ["path", "Buscatrazos"]],
  [["wrap", "Ceñir texto"]],
  [["table", "Tabla"], ["cellStyle", "Estilos de c..."], ["tableStyle", "Estilos de t..."]],
  [["char", "Carácter"]],
  [["para", "Párrafo"]],
  [["preview", "Previsualiza..."]],
  [["check", "Comprobac..."]],
];

const menus = ["Archivo", "Edición", "Maquetación", "Texto", "Objeto", "Tabla", "Ver", "Ventana", "Ayuda"];

export default function App() {
  return (
    <>
      <Global />
      <MenuBar>
        <Logo>Id</Logo>
        <MenuList>
          {menus.map((m) => <MenuItem key={m}>{m}</MenuItem>)}
        </MenuList>
        <MenuDiv />
        <AppBadge $ml={15}>Br</AppBadge>
        <AppBadge $ml={20}>St</AppBadge>
        <ZoomText>150%</ZoomText>
        <Slot><Chev /></Slot>
        <MenuDiv $ml={12} />
        <Slot $ml={9} $gap={7}>{menuIcons.film}<Chev /></Slot>
        <Slot $ml={14} $gap={7}>{menuIcons.screen}<Chev /></Slot>
        <Slot $ml={14} $gap={7}>{menuIcons.layout}<Chev /></Slot>
        <Publish $ml={223}>{menuIcons.upload}Publish Online</Publish>
        <MenuDiv $ml={8} />
        <Workspace>Aspectos esenciales</Workspace>
        <Slot $ml={2}><Chev color="#333" /></Slot>
        <MenuDiv $ml={12} />
        <StockBox>{menuIcons.search}Adobe Stock</StockBox>
        <WinControls>
          <WinBtn $w={27}><Glyph w={10} h={2}><rect width="10" height="2" /></Glyph></WinBtn>
          <WinBtn $w={28}><Glyph w={11} h={11}><path d="M3.5 .5 H10.5 V7.5 H8 M.5 3.5 H7.5 V10.5 H.5 Z" {...line} strokeWidth="1.2" /></Glyph></WinBtn>
          <WinBtn $w={37}><Glyph w={10} h={9}><path d="M.5 .5 L9.5 8.5 M9.5 .5 L.5 8.5" stroke="currentColor" strokeWidth="1.8" /></Glyph></WinBtn>
        </WinControls>
      </MenuBar>

      <ControlPanel>
        <Grip />
        <Centered $ml={20}>{ctl.ref}</Centered>
        <Cluster $ml={11} $cols="14px 87px 26px 87px">
          <Label>X:</Label><SpinField /><Label>An:</Label><SpinField />
          <Label>Y:</Label><SpinField /><Label>Al:</Label><SpinField />
        </Cluster>
        <Centered $ml={10}>{ctl.unlink}</Centered>
        <PanelDiv $ml={11} />
        <Cluster $ml={6} $gap={5} $cols="14px 87px">
          {ctl.boxR}<SpinField drop />
          {ctl.boxD}<SpinField drop />
        </Cluster>
        <ChainBtn>{ctl.chain}</ChainBtn>
        <Cluster $ml={10} $gap={7} $cols="12px 87px">
          {ctl.angle}<SpinField drop />
          {ctl.shear}<SpinField drop />
        </Cluster>
        <PanelDiv $ml={4} />
        <Cluster $ml={7} $gap={9} $cols="18px 18px">
          {ctl.rotCw}{ctl.rotCcw}{ctl.flipH}{ctl.flipV}
        </Cluster>
        <Centered $ml={10}>{ctl.p}</Centered>
        <PanelDiv $ml={7} />
        <Cluster $ml={10} $gap={6} $cols="18px 18px">
          {ctl.tree("up")}{ctl.tree("left")}{ctl.tree("down")}{ctl.tree("right")}
        </Cluster>
        <PanelDiv $ml={9} />
        <Cluster $ml={4} $gap={4} $cols="21px 16px">
          <QBox>?</QBox><NextBtn><Chev dir="right" /></NextBtn>
          <DashQ /><NextBtn><Chev dir="right" /></NextBtn>
        </Cluster>
        <PanelDiv $ml={6} />
        <Stack $ml={5} $w={86}>
          <WhiteBox $w={86}>
            <BoxPart $w={17} $bg="#dcdcdc"><Spin /></BoxPart>
            <BoxPart />
            <BoxPart $w={18}><Chev /></BoxPart>
          </WhiteBox>
          <WhiteBox $w={86}>
            <BoxPart $pad="0 4px"><BlackBar /></BoxPart>
            <BoxPart $w={18}><Chev /></BoxPart>
          </WhiteBox>
        </Stack>
        <PanelDiv $ml={6} />
        <Stack $ml={6} $w={90}>
          <Row $pl={3}>
            {ctl.fitDash}
            <Slot $ml={14}>{ctl.shadow}</Slot>
            <Slot $ml={16}><Fx>fx.</Fx></Slot>
          </Row>
          <Row $pl={1} $gap={5}>
            {ctl.checker}
            <WhiteBox $w={69}>
              <BoxPart $justify="flex-start" $pad="0 0 0 3px">100%</BoxPart>
              <BoxPart $w={18}><Chev dir="right" /></BoxPart>
            </WhiteBox>
          </Row>
        </Stack>
        <PanelDiv $ml={5} />
        <Cluster $ml={5} $gap={8} $cols="23px 16px">
          <WrapBtn $on>{ctl.wrapOn}</WrapBtn>{ctl.wrapTwo}
          {ctl.wrapRound}{ctl.wrapJump}
        </Cluster>
        <PanelDiv $ml={9} />
        <Cluster $ml={7} $gap={4} $cols="15px 86px">
          {ctl.spacing}
          <WhiteBox $w={86}>
            <BoxPart $w={17} $bg="#f0f0f0"><Spin /></BoxPart>
            <BoxPart $justify="flex-start" $pad="0 0 0 4px">4.233 mm</BoxPart>
          </WhiteBox>
          <span />
          <WhiteBox $w={86}>
            <BoxPart $pad="0"><StrokeSample /></BoxPart>
            <BoxPart $w={18}><Chev /></BoxPart>
          </WhiteBox>
        </Cluster>
        <Stack $ml={12} $w={136}>
          <Row $pl={3}>
            {ctl.fill1}
            <Slot $ml={11}>{ctl.fill2}</Slot>
            <PanelDiv $ml={11} $h={21} />
            <Slot $ml={9}>{ctl.fit(0)}</Slot>
            <Slot $ml={11}>{ctl.fit(1)}</Slot>
            <Slot $ml={12}>{ctl.fit(2)}</Slot>
          </Row>
          <Row $gap={6}>
            <Check />
            <CheckText>Encaje automático</CheckText>
          </Row>
        </Stack>
        <PanelDiv $ml={8} />
        <Cluster $ml={9} $gap={11.5} $cols="16px 16px 16px 21px">
          {ctl.alignL}{ctl.alignC}{ctl.alignR}{ctl.alignPage}
          {ctl.alignT}{ctl.alignM}{ctl.alignB}<span />
        </Cluster>
        <PanelDiv $ml={10} />
        <Cluster $ml={8} $gap={9} $cols="18px 18px 18px">
          {ctl.distT}{ctl.distC}{ctl.distB}
          {ctl.distL}{ctl.distM}{ctl.distR}
        </Cluster>
        <PanelDiv $ml={8} />
        <Centered $ml={18}><FaBolt size={13} /></Centered>
        <PanelDiv $ml={10} />
        <Cluster $ml={6} $cols="14px">
          <FaCog size={12} />
          {ctl.bars}
        </Cluster>
      </ControlPanel>

      <Main>
        <ToolBar>
          <StripLeft>▶▶</StripLeft>
          <ToolGrip />
          <ToolOn>{toolIcons.arrow}</ToolOn>
          <Tool>{toolIcons.direct}</Tool>
          <Tool>{toolIcons.pageT}</Tool>
          <Tool>{toolIcons.gap}</Tool>
          <Tool $corner>{toolIcons.collect}</Tool>
          <ToolSep />
          <Tool $corner><ToolT>T</ToolT></Tool>
          <Tool>{toolIcons.line}</Tool>
          <Tool $corner><FaPenNib size={15} /></Tool>
          <Tool $corner><FaPencilAlt size={15} /></Tool>
          <Tool $corner>{toolIcons.frameX}</Tool>
          <Tool $corner>{toolIcons.rect}</Tool>
          <ToolSep />
          <Tool><Scissors size={18} strokeWidth={2.5} /></Tool>
          <Tool $corner>{toolIcons.transform}</Tool>
          <Tool>{toolIcons.gradient}</Tool>
          <Tool>{toolIcons.feather}</Tool>
          <ToolSep />
          <Tool>{toolIcons.note}</Tool>
          <Tool $corner><Pipette size={17} /></Tool>
          <Tool><FaHandPaper size={16} /></Tool>
          <Tool><Search size={17} strokeWidth={2} /></Tool>
          <ToolSep />
          <Swatches>
            <SwatchRow>
              <Glyph w={11} h={11}>
                <rect x=".5" y=".5" width="7" height="7" fill="#fff" stroke="#444" />
                <rect x="3.5" y="3.5" width="7" height="7" fill="#fff" stroke="#444" />
                <path d="M4 10 L10 4" stroke="#e22" />
              </Glyph>
              <Glyph w={11} h={12}>
                <path d="M1 3 H8 V9 M1 3 L3 1 M1 3 L3 5 M8 10 L6 8 M8 10 L10 8" fill="none" stroke="currentColor" strokeWidth="1.3" />
              </Glyph>
            </SwatchRow>
            <BigQ>?</BigQ>
            <BackQ>?<br />? ?</BackQ>
            <ModeRow>
              <ModeBtn><Glyph w={10} h={10} color="#444"><rect x="1" y="1" width="8" height="8" fill="#bbb" stroke="#444" strokeWidth="1.3" /></Glyph></ModeBtn>
              <ModeT>T</ModeT>
            </ModeRow>
          </Swatches>
          <NoneSwatch>
            <Glyph w={15} h={13}><path d="M0 13 L15 0" stroke="#e5202a" strokeWidth="1.5" /></Glyph>
          </NoneSwatch>
          <ViewMode $corner>
            <Glyph w={12} h={12}>
              <rect width="12" height="12" />
              <rect x="2" y="2" width="5" height="5" fill="#b5b5b5" />
              <rect x="5" y="5" width="5" height="5" fill="#b5b5b5" stroke="#444" />
            </Glyph>
          </ViewMode>
        </ToolBar>

        <Center>
          <TabBar>
            <Tab $w={194}>*003 ESPECIAL.indd @ 125%<b>×</b></Tab>
            <Tab $w={153} $on>*Sin título-1 @ 150%<b>×</b></Tab>
          </TabBar>
          <View>
            <ViewLeft>
              <HRuler>
                <RulerCorner>
                  <Glyph w={15} h={16}>
                    <path d="M1 8.5 H14 M7.5 2 V15" stroke="#333" strokeDasharray="1 1" />
                  </Glyph>
                </RulerCorner>
                <HTrack>
                  {rulerH.map((n) => <HCell key={n}>{n}</HCell>)}
                </HTrack>
              </HRuler>
              <Stage>
                <VRuler>
                  {rulerV.map((n) => (
                    <VCell key={n}>
                      {String(n).split("").map((d, i) => <span key={i}>{d}</span>)}
                    </VCell>
                  ))}
                </VRuler>
                <Canvas>
                  <Page>
                    <Chart>
                      <ChartHead>
                        <Condensed $color="#fff">GRÁFICO <Squiggle>N°</Squiggle> 2</Condensed>
                      </ChartHead>
                      <ChartBody>
                        <SourceBox><Condensed>VÍAS DE<br />ADOPCIÓN</Condensed></SourceBox>
                        <ArrowCol><Arrow /><Arrow /><Arrow /></ArrowCol>
                        <TargetCol>
                          <TargetBox><Condensed>JUDICIAL</Condensed></TargetBox>
                          <TargetBox><Condensed $sx={0.78}>ADMINISTRATIVA</Condensed></TargetBox>
                          <TargetBox><Condensed>NOTARIAL</Condensed></TargetBox>
                        </TargetCol>
                      </ChartBody>
                    </Chart>
                  </Page>
                </Canvas>
              </Stage>
            </ViewLeft>
            <ScrollV>
              <Chev dir="up" color="#bbb" />
              <ThumbV />
              <Chev color="#bbb" />
            </ScrollV>
          </View>
          <StatusBar>
            <Slot $ml={12} $gap={13} style={{ color: "#999" }}>
              <Glyph w={9} h={10}><path d="M0 0 H2 V10 H0 Z M9 0 V10 L3 5 Z" /></Glyph>
              <Glyph w={6} h={10}><path d="M6 0 V10 L0 5 Z" /></Glyph>
            </Slot>
            <StatusField $w={89}>
              <BoxPart $justify="flex-start" $pad="0 0 0 3px">1</BoxPart>
              <BoxPart $w={18}><Chev /></BoxPart>
            </StatusField>
            <Slot $ml={13} $gap={13} style={{ color: "#999" }}>
              <Glyph w={6} h={10}><path d="M0 0 V10 L6 5 Z" /></Glyph>
              <Glyph w={9} h={10}><path d="M0 0 V10 L6 5 Z M7 0 H9 V10 H7 Z" /></Glyph>
            </Slot>
            <Slot $ml={15}>
              <Glyph w={15} h={14}>
                <path d="M2 13 V6 A5 5 0 0 1 12 6 V13" fill="none" stroke="#555" strokeWidth="2.2" />
                <path d="M7 3 V8 H10" fill="none" stroke="#555" />
              </Glyph>
            </Slot>
            <StatusText $ml={19} $w={102}>[Básico] (usado)</StatusText>
            <Chev />
            <GreenDot />
            <StatusText $ml={5} $w={72} $color="#333">Sin errores</StatusText>
            <Chev color="#444" />
            <Slot $ml={8}><Chev dir="left" color="#aaa" /></Slot>
            <ThumbH />
            <Slot $ml={239}><Chev dir="right" color="#aaa" /></Slot>
            <SplitIcon><i /></SplitIcon>
            <Resize />
          </StatusBar>
        </Center>

        <Side>
          <StripRight>◀◀</StripRight>
          {panels.map((g, i) => (
            <Group key={i}>
              {g.map(([icon, label]) => (
                <Item key={label + icon}>
                  <ItemIcon>{panelIcons[icon]}</ItemIcon>
                  {label}
                </Item>
              ))}
            </Group>
          ))}
        </Side>
      </Main>

      <Taskbar>
        <TbIcon $ml={10} $mt={23}>
          <Glyph w={16} h={16}>
            <path d="M0 2.3 L6.8 1.3 V7.5 H0 Z M7.7 1.2 L16 0 V7.5 H7.7 Z M0 8.4 H6.8 V14.7 L0 13.7 Z M7.7 8.4 H16 V16 L7.7 14.8 Z" />
          </Glyph>
        </TbIcon>
        <TbIcon $ml={20} $mt={22}>
          <svg width="17" height="18" viewBox="0 0 17 18"><ellipse cx="8.5" cy="9" rx="7.5" ry="8" fill="none" stroke="#fff" strokeWidth="1.7" /></svg>
        </TbIcon>
        <TbIcon $ml={19} $mt={22}>
          <Glyph w={15} h={18}>
            <path d="M0 .5 H11 M0 17.5 H11" stroke="currentColor" />
            <rect x=".5" y="5.5" width="10" height="7" fill="none" stroke="currentColor" />
            <path d="M13 3 H15 V7 H13 Z M13 10 H15 V14 H13 Z" />
          </Glyph>
        </TbIcon>
        <TbIcon $ml={24} $mt={7} style={{ color: "#1c7fd6" }}><FaEdge size={17} /></TbIcon>
        <Task $ml={14}>{taskIcons.chrome}Zimbra: Enviados - G...</Task>
        <Task $ml={9} $pl={7}>{taskIcons.doc}Documentos</Task>
        <Task $ml={8} $pl={6}>{taskIcons.folder}ACTUALIDAD JURIDI...</Task>
        <Task $ml={8} $pl={7}>{taskIcons.folderBlue}Henry</Task>
        <TbIcon $ml={19} $mt={8}>
          <svg width="12" height="15" viewBox="0 0 12 15">
            <path d="M0 3 H12 V15 H0 Z" fill="#fff" />
            <path d="M3 3 V1 H9 V3" fill="none" stroke="#fff" />
            <rect x="2.5" y="6" width="3" height="3" fill="#e8502a" /><rect x="6.5" y="6" width="3" height="3" fill="#7db83a" />
            <rect x="2.5" y="10" width="3" height="3" fill="#2a9ce8" /><rect x="6.5" y="10" width="3" height="3" fill="#f0b420" />
          </svg>
        </TbIcon>
        <TbIcon $ml={22} $mt={9}>
          <svg width="16" height="14" viewBox="0 0 16 14">
            <path d="M0 5 L8 0 L16 5 V14 H0 Z" fill="#fff" />
            <path d="M1 5 L8 9 L15 5" fill="none" stroke="#17262e" />
          </svg>
        </TbIcon>
        <TbIcon $ml={20} $mt={10}>
          <svg width="15" height="14" viewBox="0 0 15 14">
            <rect width="15" height="14" fill="#2f8fd8" />
            <rect x="2" y="2" width="5" height="4" fill="#cfe8fa" /><rect x="9" y="2" width="4" height="4" fill="#f2c14e" />
            <rect x="2" y="8" width="5" height="4" fill="#f2c14e" /><rect x="9" y="8" width="4" height="4" fill="#cfe8fa" />
          </svg>
        </TbIcon>
        <Task $ml={16} $pl={3}>{taskIcons.word}Actualidad Juridica 30...</Task>
        <Task $ml={5} $w={160} $pl={8} $on>{taskIcons.id}*Sin título-1 @ 150%</Task>
        <Task $ml={5}>{taskIcons.acrobat}Adobe Acrobat Pro DC</Task>
        <TbIcon $ml={24} $mt={32}>
          <Glyph w={15} h={17}>
            <circle cx="5" cy="9" r="3" {...line} /><circle cx="10.5" cy="4" r="3" {...line} />
            <path d="M0 17 C0 13 3 12 5 12 C7 12 10 13 10 17 M10 8 C12 8 15 9 15 12" {...line} />
          </Glyph>
        </TbIcon>
        <TbIcon $ml={17} $mt={35}>
          <svg width="13" height="8" viewBox="0 0 13 8"><path d="M1 7 L6.5 1 L12 7" fill="none" stroke="#fff" strokeWidth="1.2" /></svg>
        </TbIcon>
        <TrayCol>
          <Glyph w={15} h={14} color="#fff">
            <rect x=".5" y=".5" width="14" height="10" fill="none" stroke="currentColor" />
            <rect x="2" y="2" width="4" height="4" fill="none" stroke="currentColor" />
            <path d="M7.5 11 V13.5 M3 13.5 H12" stroke="currentColor" />
          </Glyph>
          <Glyph w={15} h={14} color="#ddd">
            <path d="M1 5 H4 L8 1 V13 L4 9 H1 Z" {...line} />
            <path d="M10 4 Q12 7 10 10 M12 2 Q15 7 12 12" {...line} stroke="#888" />
          </Glyph>
        </TrayCol>
        <Clock>15:14<br />jueves<br />29/08/2019</Clock>
        <TbIcon $ml={13} $mt={22}>
          <svg width="16" height="17" viewBox="0 0 16 17">
            <path d="M0 0 H16 V13 H11 L8 17 L5 13 H0 Z" fill="#fff" />
            <path d="M3 4 H13 M3 7 H13 M3 10 H10" stroke="#17262e" />
          </svg>
        </TbIcon>
      </Taskbar>
    </>
  );
}
